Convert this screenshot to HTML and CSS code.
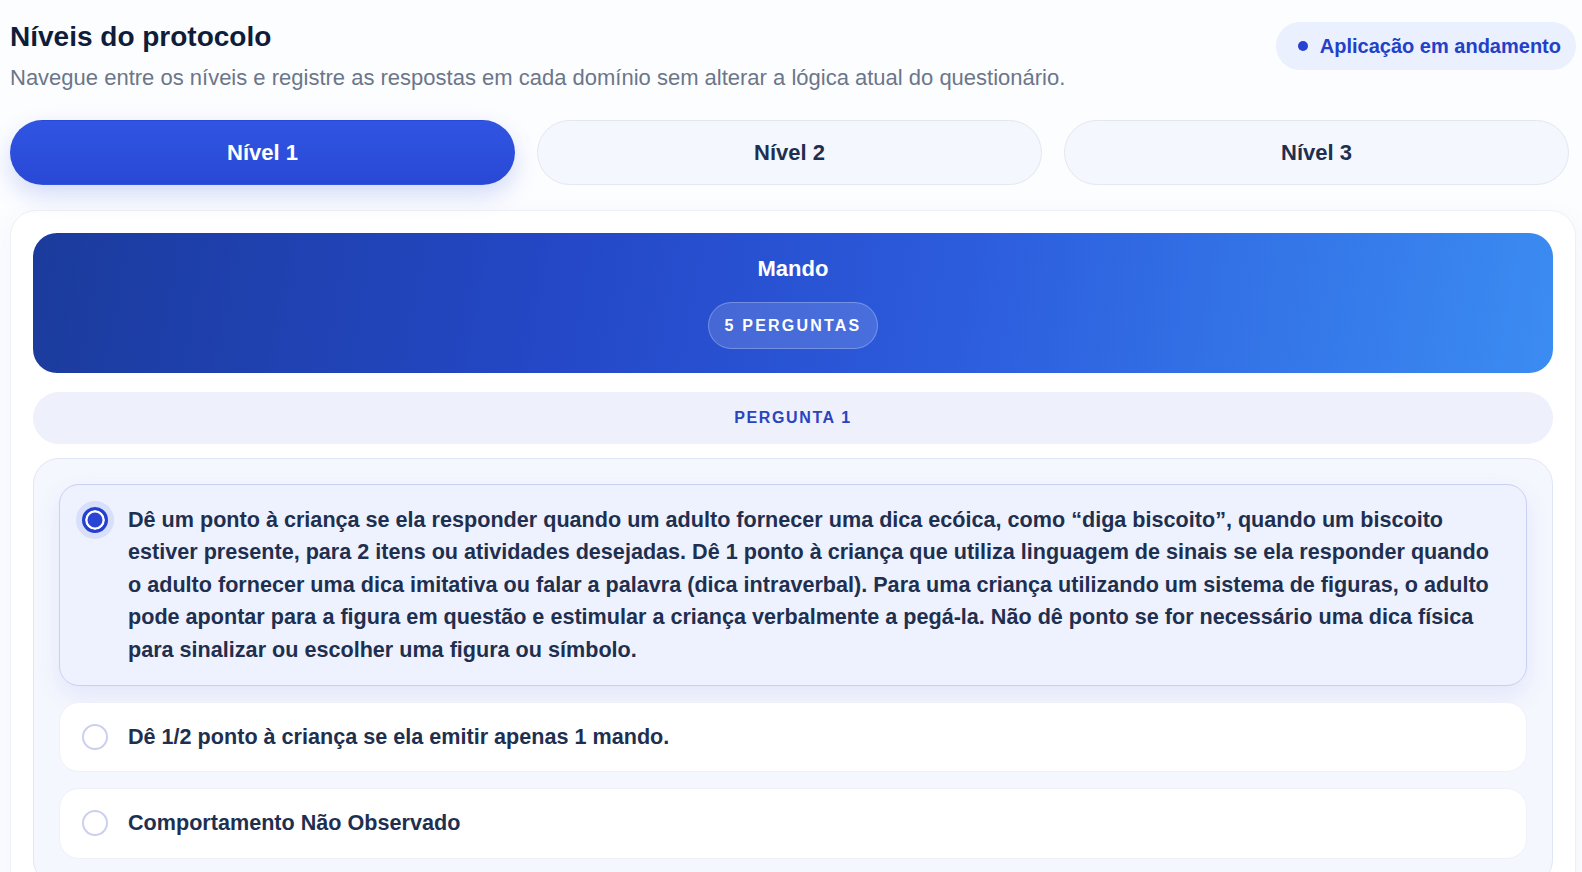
FILE: index.html
```html
<!DOCTYPE html>
<html lang="pt-BR">
<head>
    <meta charset="UTF-8">
    <meta name="viewport" content="width=device-width, initial-scale=1.0">
    <title>Níveis do protocolo</title>
    <link rel="stylesheet" href="styles.css">
</head>
<body>
    <div class="page">
        <div class="page-header">
            <div>
                <h1 class="page-title">Níveis do protocolo</h1>
                <p class="page-subtitle">Navegue entre os níveis e registre as respostas em cada domínio sem alterar a lógica atual do questionário.</p>
            </div>
            <div class="status-pill"><span class="status-dot"></span>Aplicação em andamento</div>
        </div>

        <div class="level-tabs">
            <button class="level-tab active">Nível 1</button>
            <button class="level-tab">Nível 2</button>
            <button class="level-tab">Nível 3</button>
        </div>

        <div class="domain-card">
            <div class="domain-banner">
                <div class="domain-name">Mando</div>
                <span class="domain-count">5 PERGUNTAS</span>
            </div>

            <div class="question-label">PERGUNTA 1</div>

            <div class="answers">
                <label class="answer selected">
                    <span class="radio"></span>
                    <span class="answer-text">Dê um ponto à criança se ela responder quando um adulto fornecer uma dica ecóica, como “diga biscoito”, quando um biscoito estiver presente, para 2 itens ou atividades desejadas. Dê 1 ponto à criança que utiliza linguagem de sinais se ela responder quando o adulto fornecer uma dica imitativa ou falar a palavra (dica intraverbal). Para uma criança utilizando um sistema de figuras, o adulto pode apontar para a figura em questão e estimular a criança verbalmente a pegá-la. Não dê ponto se for necessário uma dica física para sinalizar ou escolher uma figura ou símbolo.</span>
                </label>
                <label class="answer">
                    <span class="radio"></span>
                    <span class="answer-text">Dê 1/2 ponto à criança se ela emitir apenas 1 mando.</span>
                </label>
                <label class="answer">
                    <span class="radio"></span>
                    <span class="answer-text">Comportamento Não Observado</span>
                </label>
            </div>
        </div>
    </div>
</body>
</html>
```
FILE: styles.css
```css
body {
    margin: 0;
    font-family: "Liberation Sans", Arial, sans-serif;
    background: #fcfdff;
    color: #1e2f4f;
    overflow: hidden;
}
.page {
    padding: 20px 6px 0 10px;
}
.page-header {
    display: flex;
    justify-content: space-between;
    align-items: flex-start;
}
.page-title {
    margin: 0;
    font-size: 28px;
    line-height: 34px;
    font-weight: bold;
    color: #0f1d3a;
}
.page-subtitle {
    margin: 10px 0 0;
    font-size: 22px;
    line-height: 28px;
    color: #6b7689;
}
.status-pill {
    display: flex;
    align-items: center;
    gap: 12px;
    margin-top: 2px;
    height: 48px;
    padding: 0 15px 0 22px;
    border-radius: 24px;
    background: #eaf0fd;
    color: #2340c8;
    font-size: 20px;
    font-weight: bold;
}
.status-dot {
    width: 10px;
    height: 10px;
    border-radius: 50%;
    background: #2741d0;
}
.level-tabs {
    display: grid;
    grid-template-columns: repeat(3, 1fr);
    gap: 22px;
    margin-top: 28px;
    padding-right: 7px;
}
.level-tab {
    height: 65px;
    border: 1px solid #e3e7ef;
    border-radius: 33px;
    background: #f4f7fd;
    color: #1e2f4f;
    font-family: inherit;
    font-size: 22px;
    font-weight: bold;
    cursor: pointer;
}
.level-tab.active {
    border-color: transparent;
    background: linear-gradient(180deg, #3055e2, #2948d6);
    color: #fff;
    box-shadow: 0 10px 24px rgba(45, 80, 220, 0.2);
}
.domain-card {
    margin-top: 25px;
    padding: 22px;
    background: #fff;
    border: 1px solid #edf0f5;
    border-radius: 26px;
    box-shadow: 0 10px 30px rgba(30, 50, 120, 0.05);
}
.domain-banner {
    display: flex;
    flex-direction: column;
    align-items: center;
    padding: 22px 20px 24px;
    border-radius: 24px;
    background: linear-gradient(100deg, #1b3b9c 0%, #2448c7 35%, #2c5bdc 60%, #3b8cf2 100%);
    color: #fff;
}
.domain-name {
    font-size: 22px;
    line-height: 28px;
    font-weight: bold;
}
.domain-count {
    margin-top: 19px;
    padding: 0 16px;
    line-height: 45px;
    border: 1px solid rgba(255, 255, 255, 0.25);
    border-radius: 24px;
    background: rgba(255, 255, 255, 0.14);
    font-size: 16px;
    font-weight: bold;
    letter-spacing: 2.2px;
}
.question-label {
    margin-top: 19px;
    height: 52px;
    line-height: 52px;
    border-radius: 26px;
    background: #eef0fb;
    color: #2a44c0;
    text-align: center;
    font-size: 16px;
    font-weight: bold;
    letter-spacing: 1.6px;
}
.answers {
    display: flex;
    flex-direction: column;
    gap: 16px;
    margin-top: 14px;
    padding: 25px 25px 26px;
    background: #f5f7fe;
    border: 1px solid #e1e6f4;
    border-radius: 26px;
}
.answer {
    display: flex;
    align-items: flex-start;
    gap: 20px;
    padding: 18px 22px;
    background: #fff;
    border: 1px solid #eef1f8;
    border-radius: 20px;
    cursor: pointer;
}
.answer.selected {
    padding-top: 19px;
    padding-bottom: 19px;
    background: #eef2fe;
    border-color: #c9d0f1;
    box-shadow: 0 10px 24px rgba(59, 91, 219, 0.1);
}
.radio {
    flex: none;
    box-sizing: border-box;
    width: 26px;
    height: 26px;
    margin-top: 3px;
    border: 2px solid #cbcff0;
    border-radius: 50%;
    background: #fff;
}
.answer.selected .radio {
    border: 3px solid #2340d0;
    background: #2a45d6;
    box-shadow: inset 0 0 0 2.5px #fff, 0 0 0 6px rgba(59, 91, 219, 0.12);
}
.answer-text {
    font-size: 21.6px;
    line-height: 32.4px;
    font-weight: bold;
    color: #1e2f4f;
}
```
